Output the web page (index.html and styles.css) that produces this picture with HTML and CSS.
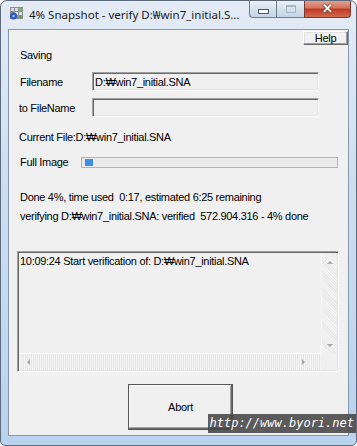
FILE: index.html
```html
<!DOCTYPE html>
<html lang="en">
<head>
  <meta charset="UTF-8" />
  <title>4% Snapshot - verify</title>
  <link rel="stylesheet" href="styles.css">
</head>
<body>
  <div class="window">
    <div class="titlebar">
      <svg class="app-icon" width="15" height="15" viewBox="0 0 15 15">
        <rect x="1" y="1" width="13" height="12" fill="#8a8f96"/>
        <rect x="2" y="2" width="3" height="3" fill="#d9dde2"/>
        <rect x="6" y="2" width="3" height="3" fill="#d9dde2"/>
        <rect x="10" y="2" width="3" height="3" fill="#6fbf4a"/>
        <rect x="6" y="6" width="3" height="3" fill="#d9dde2"/>
        <rect x="10" y="6" width="3" height="3" fill="#d9dde2"/>
        <rect x="10" y="10" width="3" height="2" fill="#5aa83a"/>
        <circle cx="4.5" cy="10" r="3.5" fill="#2b56c9"/>
        <circle cx="4.5" cy="10" r="1.3" fill="#9fb8f0"/>
      </svg>
      <span class="title">4% Snapshot - verify D:₩win7_initial.S...</span>
      <div class="caption-buttons">
        <span class="cap cap-min"><i></i></span>
        <span class="cap cap-max"><i></i></span>
        <span class="cap cap-close">✕</span>
      </div>
    </div>

    <div class="client">
      <div class="help-row">
        <button class="btn btn-help">Help</button>
      </div>

      <div class="line saving">Saving</div>

      <div class="field-row row-file">
        <span class="label">Filename</span>
        <div class="edit">D:₩win7_initial.SNA</div>
      </div>
      <div class="field-row row-to">
        <span class="label">to FileName</span>
        <div class="edit"></div>
      </div>

      <div class="line current">Current File:D:₩win7_initial.SNA</div>

      <div class="progress-row">
        <span class="label">Full Image</span>
        <div class="progress"><div class="chunk"></div></div>
      </div>

      <div class="line done">Done 4%, time used&nbsp; 0:17, estimated 6:25 remaining</div>
      <div class="line verifying">verifying D:₩win7_initial.SNA: verified&nbsp; 572.904.316 - 4% done</div>

      <div class="log">
        <div class="log-view">
          <div class="log-text">10:09:24 Start verification of: D:₩win7_initial.SNA</div>
          <div class="vscroll">
            <span class="arrow arrow-up"></span>
            <span class="arrow arrow-down"></span>
          </div>
        </div>
        <div class="hscroll">
          <div class="hbar">
            <span class="arrow arrow-left"></span>
            <span class="arrow arrow-right"></span>
          </div>
          <div class="corner"></div>
        </div>
      </div>

      <div class="actions">
        <button class="btn btn-abort">Abort</button>
      </div>
    </div>

    <div class="watermark">http://www.byori.net</div>
  </div>
</body>
</html>
```

FILE: styles.css
```css
body {
  margin: 0;
  background: #fff;
  font-family: "Liberation Sans", Arial, sans-serif;
  font-size: 11px;
  letter-spacing: -0.3px;
  color: #000;
}
.window {
  position: relative;
  width: 357px;
  height: 446px;
  box-sizing: border-box;
  padding: 0 7px 10px 7px;
  border: 1px solid #5d6b7c;
  border-radius: 7px 7px 5px 5px;
  background: linear-gradient(#e3ebf5, #cfdff1 40%, #b9d2ee);
  overflow: hidden;
}
.titlebar {
  height: 28px;
  display: flex;
  align-items: flex-start;
}
.app-icon {
  margin: 5px 0 0 1px;
}
.title {
  margin: 6px 0 0 5px;
  font-family: "Noto Sans", "DejaVu Sans", sans-serif;
  font-size: 11.5px;
  letter-spacing: 0;
  color: #1b1b1b;
  white-space: nowrap;
}
.caption-buttons {
  margin-left: auto;
  margin-right: -2px;
  display: flex;
  margin-top: -1px;
}
.cap {
  height: 18px;
  display: flex;
  align-items: center;
  justify-content: center;
  border: 1px solid #6f7f93;
  border-top: none;
  box-sizing: border-box;
  background: linear-gradient(#eef3f9, #d7e2ef 50%, #c5d4e6);
}
.cap-min {
  width: 27px;
  border-right: none;
  border-radius: 0 0 0 4px;
}
.cap-min i {
  width: 9px;
  height: 3px;
  margin-top: 5px;
  background: #fff;
  border: 1px solid #4a5666;
}
.cap-max {
  width: 28px;
  border-right: none;
}
.cap-max i {
  width: 8px;
  height: 6px;
  border: 1px solid #a9b5c4;
  box-shadow: inset 0 1px 0 #a9b5c4;
}
.cap-close {
  width: 47px;
  border-color: #7a3a32;
  border-radius: 0 0 4px 0;
  background: linear-gradient(#e6a796, #d47561 45%, #c23b22 55%, #cf6a4f);
  color: #fff;
  font-size: 13px;
  font-weight: bold;
  text-shadow: 0 0 2px #3a1a14, 0 0 1px #3a1a14;
}
.client {
  height: 407px;
  box-sizing: border-box;
  border: 1px solid #8497ad;
  background: #f0f0f0;
  display: flex;
  flex-direction: column;
}
.help-row {
  display: flex;
  justify-content: flex-end;
  margin-top: 1px;
}
.btn {
  font-family: "Liberation Sans", Arial, sans-serif;
  font-size: 11px;
  letter-spacing: -0.3px;
  color: #000;
  background: #f0f0f0;
  box-sizing: border-box;
  padding: 0;
  border: 1px solid;
  border-color: #fff #696969 #696969 #fff;
  box-shadow: inset -1px -1px 0 #a0a0a0, inset 1px 1px 0 #e3e3e3;
}
.btn-help {
  width: 45px;
  height: 14px;
  line-height: 11px;
}
.line {
  margin-left: 11px;
  height: 14px;
  line-height: 14px;
  white-space: nowrap;
}
.saving { margin-top: 3px; }
.current { margin-top: 13px; margin-left: 10px; }
.done { margin-top: 21px; }
.verifying { margin-top: 5px; }
.field-row,
.progress-row {
  display: flex;
  align-items: center;
  margin-left: 11px;
}
.field-row { height: 19px; }
.row-file { margin-top: 10px; }
.row-to { margin-top: 7px; margin-left: 10px; }
.row-to .label { width: 73px; }
.label {
  width: 72px;
  white-space: nowrap;
}
.edit {
  width: 227px;
  height: 19px;
  box-sizing: border-box;
  border: 1px solid;
  border-color: #a0a0a0 #fff #fff #a0a0a0;
  box-shadow: inset 1px 1px 0 #696969, inset -1px -1px 0 #e3e3e3;
  padding: 2px 0 0 2px;
  line-height: 14px;
}
.progress-row {
  height: 14px;
  margin-top: 11px;
}
.progress-row .label { width: 61px; }
.progress {
  width: 257px;
  height: 11px;
  box-sizing: border-box;
  border: 1px solid #b4b4b4;
  background: #eaeaea;
  padding: 1px 3px;
}
.chunk {
  width: 8px;
  height: 7px;
  background: #3d8fe4;
}
.log {
  margin: 28px 0 0 8px;
  width: 322px;
  height: 121px;
  box-sizing: border-box;
  border: 1px solid;
  border-color: #a0a0a0 #fff #fff #a0a0a0;
  box-shadow: inset 1px 1px 0 #696969, inset -1px -1px 0 #e3e3e3;
  padding: 2px 1px 1px 2px;
  display: flex;
  flex-direction: column;
}
.log-view {
  flex: 1;
  display: flex;
}
.log-text {
  flex: 1;
  line-height: 14px;
  white-space: nowrap;
}
.vscroll {
  width: 16px;
  background: repeating-linear-gradient(45deg, #f4f4f4 0 1px, #e9e9e9 1px 2px);
  border-left: 1px solid #fbfbfb;
  display: flex;
  flex-direction: column;
  justify-content: space-between;
  align-items: center;
  padding: 7px 0 6px;
  box-sizing: border-box;
}
.hscroll {
  height: 17px;
  display: flex;
}
.hbar {
  flex: 1;
  background: repeating-linear-gradient(90deg, #f5f5f5 0 1px, #e6e6e6 1px 2px);
  border-top: 1px solid #fbfbfb;
  display: flex;
  justify-content: space-between;
  align-items: center;
  padding: 0 16px 0 7px;
}
.corner {
  width: 16px;
  background: #f0f0f0;
}
.arrow {
  width: 0;
  height: 0;
  border: 3px solid transparent;
}
.arrow-up { border-bottom: 3px solid #a8a8a8; border-top: 0; }
.arrow-down { border-top: 3px solid #a8a8a8; border-bottom: 0; }
.arrow-left { border-right: 3px solid #a8a8a8; border-left: 0; }
.arrow-right { border-left: 3px solid #a8a8a8; border-right: 0; }
.actions {
  display: flex;
  margin-top: 12px;
  padding-left: 119px;
}
.btn-abort {
  width: 105px;
  height: 46px;
  border: 1px solid #555;
  box-shadow: inset -1px -1px 0 #696969, inset 1px 1px 0 #fff, inset -2px -2px 0 #a0a0a0;
}
.watermark {
  position: absolute;
  right: 0;
  bottom: 12px;
  width: 148px;
  height: 19px;
  background: rgba(70, 70, 70, 0.88);
  color: #fff;
  font-family: "DejaVu Sans Mono", monospace;
  font-style: italic;
  font-size: 12px;
  letter-spacing: 0;
  line-height: 19px;
  text-align: right;
  padding-right: 2px;
  box-sizing: border-box;
  white-space: nowrap;
}
```
